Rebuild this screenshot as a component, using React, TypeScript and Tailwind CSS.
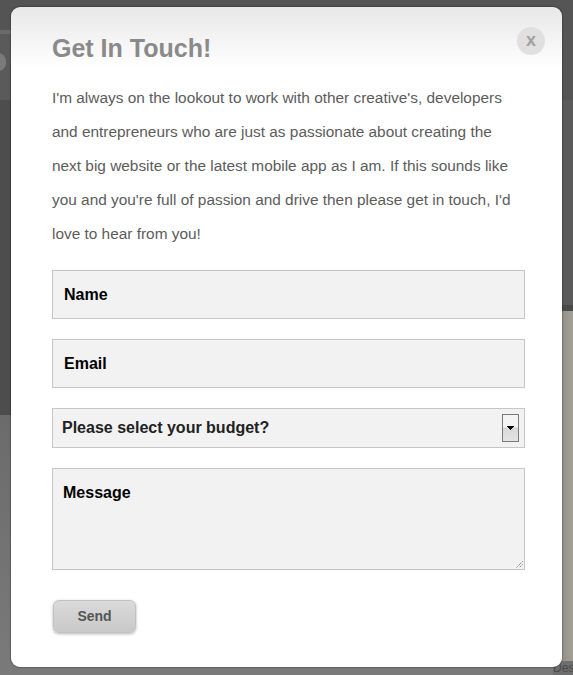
import React from "react";

export default function App() {
  const font = { fontFamily: '"Liberation Sans", Arial, sans-serif' } as React.CSSProperties;
  return (
    <div className="relative flex h-[675px] w-[573px] overflow-hidden bg-[#555555]" style={font}>
      {/* dimmed page behind the modal */}
      <div className="flex flex-1 flex-col">
        <div className="h-[30px] bg-[#545454]" />
        <div className="h-[4px] bg-[#6a6a6a]" />
        <div className="flex h-[66px] items-start bg-[#5a5a5a] pt-[19px]">
          <div className="-ml-[10px] h-[18px] w-[16px] rounded-full bg-[#7a7a7a]" />
        </div>
        <div className="h-[315px] bg-[#4d4d4d]" />
        <div className="flex-1 bg-[linear-gradient(to_bottom,#6b6b6b,#7a7a7a)]" />
      </div>
      <div className="flex w-[20px] flex-col">
        <div className="h-[100px] bg-[#555555]" />
        <div className="h-[205px] bg-[#5a5a5a]" />
        <div className="h-[6px] bg-[#4a4a4a]" />
        <div className="h-[350px] bg-[linear-gradient(to_right,#8a877f,#a29f97)]" />
        <div className="flex-1 overflow-hidden whitespace-nowrap bg-[#6e6e6e] text-[12px] leading-[14px] text-[#4a4a4a]">
          Des
        </div>
      </div>

      <div className="absolute left-[11px] top-[7px] h-[660px] w-[551px] rounded-[9px] bg-[linear-gradient(to_bottom,#e8e8e8,#ffffff_62px)] pl-[41px] pr-[38px] pt-[26px] shadow-[0_0_2px_rgba(0,0,0,0.7)]">
        <button className="absolute right-[17px] top-[20px] flex h-[28px] w-[28px] items-center justify-center rounded-full bg-[#e0e0e0] pb-[3px] text-[18px] font-bold leading-none text-[#a0a0a0]">
          x
        </button>
        <h1 className="text-[25px] font-bold leading-[30px] text-[#8a8a8a]">Get In Touch!</h1>
        <p className="mt-[18px] text-[15.4px] leading-[34px] text-[#5c5c5c]">
          I'm always on the lookout to work with other creative's, developers and entrepreneurs who are just as passionate about creating the next big website or the latest mobile app as I am. If this sounds like you and you're full of passion and drive then please get in touch, I'd love to hear from you!
        </p>
        <div className="mt-[19px] flex w-[473px] flex-col gap-[20px]">
          <div className="flex h-[49px] items-center border border-[#c6c6c6] bg-[#f2f2f2] pl-[11px] text-[16px] font-bold text-black">
            Name
          </div>
          <div className="flex h-[49px] items-center border border-[#c6c6c6] bg-[#f2f2f2] pl-[11px] text-[16px] font-bold text-black">
            Email
          </div>
          <div className="flex h-[40px] items-center justify-between border border-[#c6c6c6] bg-[#f2f2f2] pl-[9px] pr-[5px] text-[16px] font-bold text-[#222]">
            <span>Please select your budget?</span>
            <div className="flex h-[28px] w-[17px] items-start justify-center border border-[#7a7a7a] bg-[linear-gradient(to_bottom,#f4f4f4,#f4f4f4_45%,#d8d8d8_50%,#e4e4e4)] pt-[11px]">
              <svg width="7" height="4" viewBox="0 0 7 4">
                <path d="M0 0h7v1h-1v1h-1v1h-1v1h-1v-1h-1v-1h-1v-1h-1z" fill="#000" />
              </svg>
            </div>
          </div>
          <div className="relative h-[102px] border border-[#c6c6c6] bg-[#f2f2f2] pl-[10px] pt-[14px] text-[16px] font-bold leading-[20px] text-black">
            Message
            <svg className="absolute bottom-[1px] right-[1px]" width="8" height="8" viewBox="0 0 8 8">
              <path d="M7.5 1.5 L1.5 7.5 M7.5 4.5 L4.5 7.5" stroke="#555" strokeWidth="1" strokeDasharray="1 1" />
            </svg>
          </div>
        </div>
        <button className="mt-[30px] ml-[1px] h-[33px] w-[83px] rounded-[6px] border border-[#c2c2c2] bg-[linear-gradient(to_bottom,#dadada,#c9c9c9)] text-[14px] font-bold text-[#555] shadow-[0_1px_3px_rgba(0,0,0,0.3)]">
          Send
        </button>
      </div>
    </div>
  );
}
